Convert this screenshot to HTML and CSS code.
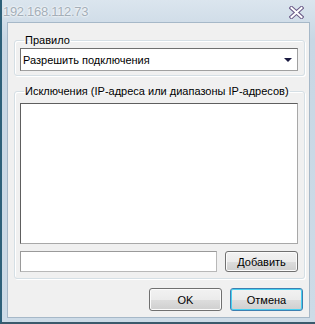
FILE: index.html
```html
<!DOCTYPE html>
<html lang="ru">
<head>
<meta charset="UTF-8">
<title>192.168.112.73</title>
<link rel="stylesheet" href="styles.css">
</head>
<body>

<div class="window">
    <div class="titlebar">
        <span class="title">192.168.112.73</span>
        <span class="close">
            <svg width="15" height="13" viewBox="0 0 15 13">
                <path d="M2.5 2 L7.5 6.5 L12.5 2 M2.5 11 L7.5 6.5 L12.5 11" stroke="#6a5a88" stroke-width="4" fill="none" stroke-linecap="square"/>
                <path d="M2.5 2 L7.5 6.5 L12.5 2 M2.5 11 L7.5 6.5 L12.5 11" stroke="#ffffff" stroke-width="2" fill="none" stroke-linecap="square"/>
            </svg>
        </span>
    </div>
    <div class="client">
        <fieldset class="group group-rule">
            <legend>Правило</legend>
            <div class="combo">
                <span>Разрешить подключения</span>
                <span class="arrow"></span>
            </div>
        </fieldset>
        <fieldset class="group group-except">
            <legend>Исключения (IP-адреса или диапазоны IP-адресов)</legend>
            <div class="listbox"></div>
            <div class="add-row">
                <div class="textbox"></div>
                <button class="btn btn-add">Добавить</button>
            </div>
        </fieldset>
        <div class="footer">
            <button class="btn btn-main">OK</button>
            <button class="btn btn-main btn-focus">Отмена</button>
        </div>
    </div>
</div>

</body>
</html>
```

FILE: styles.css
```css
html, body {
    margin: 0;
    padding: 0;
}
body {
    font-family: "Liberation Sans", "DejaVu Sans", sans-serif;
    font-size: 11px;
    color: #000;
    background: #c9d8e5;
}
.window {
    width: 315px;
    height: 324px;
    box-sizing: border-box;
    border-left: 2px solid #2d6079;
    border-bottom: 2px solid #3b5a6c;
    background: linear-gradient(#dbe5ee, #c8d7e4 40px, #cddbe7);
    display: flex;
    flex-direction: column;
}
.titlebar {
    height: 22px;
    display: flex;
    align-items: center;
    justify-content: space-between;
    padding: 0 11px 0 1px;
}
.title {
    color: #a3aeb8;
    font-size: 13px;
    letter-spacing: -0.3px;
    text-shadow: 0 0 3px #fff, 0 0 2px #fff;
}
.close {
    display: flex;
    margin-top: 2px;
}
.client {
    flex: 1;
    margin: 0 5px 4px 5px;
    border: 1px solid #a6b8c8;
    background: #f0f0f0;
    padding: 10px 4px 0 6px;
    display: flex;
    flex-direction: column;
}
.group {
    margin: 0;
    border: 1px solid #d5dfe5;
    border-radius: 3px;
    box-shadow: inset 1px 1px 0 #fff, 1px 1px 0 #fff;
    padding: 0 6px 4px 5px;
    min-width: 0;
}
.group legend {
    padding: 0 1px;
    margin-left: 4px;
    line-height: 15px;
    white-space: nowrap;
}
.group-except {
    margin-top: 8px;
    padding-bottom: 6px;
}
.combo {
    height: 23px;
    box-sizing: border-box;
    border: 1px solid #7a7a7a;
    border-color: #707070 #a0a0a0 #a0a0a0 #707070;
    background: #fff;
    display: flex;
    align-items: center;
    justify-content: space-between;
    padding: 0 5px 0 2px;
}
.arrow {
    width: 0;
    height: 0;
    border-left: 4px solid transparent;
    border-right: 4px solid transparent;
    border-top: 4px solid #1a1a40;
}
.listbox {
    margin-top: 4px;
    height: 141px;
    box-sizing: border-box;
    border: 1px solid #828790;
    border-color: #5e5e5e #a8a8a8 #a8a8a8 #5e5e5e;
    background: #fff;
}
.add-row {
    margin-top: 7px;
    display: flex;
    gap: 8px;
}
.textbox {
    flex: 1;
    height: 21px;
    box-sizing: border-box;
    border: 1px solid #abadb3;
    border-color: #9a9a9a #b8b8b8 #b8b8b8 #9a9a9a;
    background: #fff;
}
.btn {
    font-family: inherit;
    font-size: 11px;
    color: #000;
    box-sizing: border-box;
    border: 1px solid #707070;
    border-radius: 3px;
    background: linear-gradient(#f2f2f2, #ebebeb 50%, #dddddd 51%, #cfcfcf);
    box-shadow: inset 0 0 0 1px #fbfbfb;
    padding: 0;
}
.btn-add {
    width: 73px;
    height: 21px;
}
.footer {
    margin-top: 9px;
    display: flex;
    justify-content: flex-end;
    gap: 8px;
    padding-right: 2px;
}
.btn-main {
    width: 73px;
    height: 23px;
}
.btn-focus {
    border-color: #3c7fb1;
    box-shadow: inset 0 0 0 1px #48d0f0;
}
```
